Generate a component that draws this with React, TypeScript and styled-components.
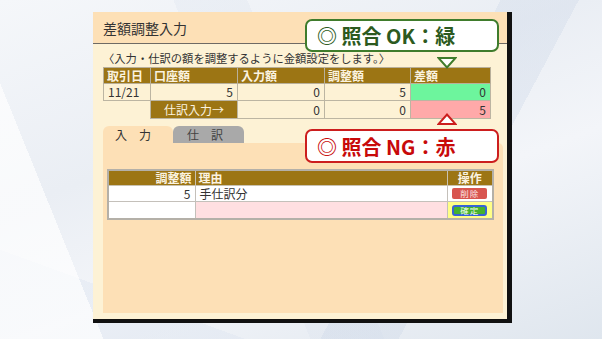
import React from 'react';
import styled, { createGlobalStyle } from 'styled-components';

const GlobalStyle = createGlobalStyle`
	html, body {
		margin: 0;
		padding: 0;
	}
	body {
		font-family: 'Noto Sans CJK JP', 'Noto Sans', sans-serif;
		color: #333;
	}
`;

const Page = styled.div`
	width: 602px;
	height: 339px;
	box-sizing: border-box;
	padding: 12px 0 0 93px;
	overflow: hidden;
	background:
		linear-gradient(118deg, transparent 0 64%, rgba(200, 212, 230, 0.3) 64% 74%, transparent 74%),
		linear-gradient(68deg, rgba(255, 255, 255, 0.7) 0 14%, transparent 14% 42%, rgba(215, 223, 236, 0.25) 42% 52%, transparent 52%),
		linear-gradient(20deg, rgba(220, 228, 240, 0.4) 0 16%, transparent 16%),
		linear-gradient(160deg, #f5f7fa 0%, #eaeef4 38%, #f3f5f9 62%, #dfe6ee 100%);
`;

const Panel = styled.div`
	position: relative;
	width: 414px;
	height: 307px;
	display: flex;
	flex-direction: column;
	background: #fdf2d5;
	border-right: 5px solid #111;
	border-bottom: 4px solid #111;
`;

const TitleBar = styled.div`
	height: 31px;
	display: flex;
	align-items: center;
	padding-left: 10px;
	background: #fde0b6;
	border-bottom: 1px solid #6e6a64;
	font-size: 14px;
	color: #333;
`;

const Body = styled.div`
	flex: 1;
	display: flex;
	flex-direction: column;
	padding: 8px 4px 6px 10px;
`;

const Description = styled.div`
	font-size: 11.3px;
	line-height: 13px;
	color: #333;
	white-space: nowrap;
`;

const Table = styled.table<{ width: number }>`
	border-collapse: collapse;
	table-layout: fixed;
	width: ${({ width }) => width}px;
	font-size: 12px;
	line-height: 14px;
`;

const HeadCell = styled.th<{ align?: string; h?: number }>`
	background: #9c7514;
	color: #fbf3e0;
	font-weight: bold;
	text-align: ${({ align }) => align || 'left'};
	padding: 0 3px;
	border: 1px solid #b9b09a;
	height: ${({ h }) => h || 15}px;
`;

const Cell = styled.td<{ bg?: string; align?: string; h?: number }>`
	background: ${({ bg }) => bg || 'transparent'};
	text-align: ${({ align }) => align || 'right'};
	padding: 0 4px;
	border: 1px solid #bcb5a2;
	height: ${({ h }) => h || 16}px;
	color: #333;
	vertical-align: middle;
`;

const EmptyCell = styled.td`
	border: none;
`;

const BrownCell = styled.td`
	background: #9c7514;
	color: #fbf3e0;
	text-align: center;
	border: 1px solid #bcb5a2;
	padding: 0 4px;
`;

const TopTable = styled(Table)`
	margin-top: 2px;
`;

const Tabs = styled.div`
	display: flex;
	margin-top: 7px;
	height: 17px;
`;

const Tab = styled.div<{ active?: boolean; pad: number; w: number }>`
	width: ${({ w }) => w}px;
	box-sizing: border-box;
	padding-left: ${({ pad }) => pad}px;
	background: ${({ active }) => (active ? '#fde0b6' : '#a9a9a9')};
	color: ${({ active }) => (active ? '#333' : '#444')};
	border-radius: 6px 6px 0 0;
	font-size: 12px;
	line-height: 18px;
`;

const TabPanel = styled.div`
	flex: 1;
	background: #fde0b6;
	border-top-right-radius: 5px;
	padding: 26px 0 0 4px;
`;

const LowerTable = styled(Table)`
	border: 2px solid #b4b0a8;
	font-size: 12px;
`;

const LowerHead = styled(HeadCell)`
	border-color: #c9c2b0;
`;

const LowerCell = styled(Cell)`
	border-color: #c4c0ba;
`;

const SmallButton = styled.div<{ variant: 'delete' | 'confirm' }>`
	width: 35px;
	height: 11px;
	margin: 0 auto;
	box-sizing: border-box;
	font-size: 8.5px;
	text-align: center;
	letter-spacing: 1px;
	color: ${({ variant }) => (variant === 'delete' ? '#fbe3e3' : '#f0fff0')};
	background: ${({ variant }) => (variant === 'delete' ? '#d8554f' : '#45b22e')};
	border: ${({ variant }) => (variant === 'confirm' ? '2px solid #3763d6' : 'none')};
	line-height: ${({ variant }) => (variant === 'confirm' ? 7 : 11)}px;
	border-radius: ${({ variant }) => (variant === 'confirm' ? 3 : 2)}px;
`;

const Callout = styled.div<{ tone: 'ok' | 'ng'; top: number; h: number }>`
	position: absolute;
	left: 212px;
	top: ${({ top }) => top}px;
	width: 194px;
	height: ${({ h }) => h}px;
	box-sizing: border-box;
	display: flex;
	align-items: center;
	padding-left: 10px;
	background: #fff;
	border: 2px solid ${({ tone }) => (tone === 'ok' ? '#3f7c2c' : '#cc1e1e')};
	border-radius: 7px;
	color: ${({ tone }) => (tone === 'ok' ? '#2c5a20' : '#c80a0a')};
	font-size: 20px;
	font-weight: bold;
	white-space: nowrap;
`;

const Arrow = styled.svg<{ top: number }>`
	position: absolute;
	left: 344px;
	top: ${({ top }) => top}px;
`;

export default function App(): JSX.Element {
	return (
		<Page>
			<GlobalStyle />
			<Panel>
				<TitleBar>差額調整入力</TitleBar>
				<Body>
					<Description>〈入力・仕訳の額を調整するように金額設定をします。〉</Description>
					<TopTable width={387}>
						<colgroup>
							<col style={{ width: 47 }} />
							<col style={{ width: 87 }} />
							<col style={{ width: 87 }} />
							<col style={{ width: 86 }} />
							<col style={{ width: 80 }} />
						</colgroup>
						<thead>
							<tr>
								<HeadCell>取引日</HeadCell>
								<HeadCell>口座額</HeadCell>
								<HeadCell>入力額</HeadCell>
								<HeadCell>調整額</HeadCell>
								<HeadCell>差額</HeadCell>
							</tr>
						</thead>
						<tbody>
							<tr>
								<Cell align="left">11/21</Cell>
								<Cell>5</Cell>
								<Cell>0</Cell>
								<Cell>5</Cell>
								<Cell bg="#6df59d">0</Cell>
							</tr>
							<tr>
								<EmptyCell />
								<BrownCell>仕訳入力→</BrownCell>
								<Cell h={17}>0</Cell>
								<Cell>0</Cell>
								<Cell bg="#ffa9a9">5</Cell>
							</tr>
						</tbody>
					</TopTable>
					<Tabs>
						<Tab active w={70} pad={12}>入　力</Tab>
						<Tab w={71} pad={14}>仕　訳</Tab>
					</Tabs>
					<TabPanel>
						<LowerTable width={385}>
							<colgroup>
								<col style={{ width: 87 }} />
								<col style={{ width: 252 }} />
								<col style={{ width: 46 }} />
							</colgroup>
							<thead>
								<tr>
									<LowerHead align="right" h={14}>調整額</LowerHead>
									<LowerHead h={14}>理由</LowerHead>
									<LowerHead align="center" h={14}>操作</LowerHead>
								</tr>
							</thead>
							<tbody>
								<tr>
									<LowerCell bg="#fff" h={15}>5</LowerCell>
									<LowerCell bg="#fff" align="left" h={15}>手仕訳分</LowerCell>
									<LowerCell bg="#fff" align="center" h={15}>
										<SmallButton variant="delete">削除</SmallButton>
									</LowerCell>
								</tr>
								<tr>
									<LowerCell bg="#fff" h={16} />
									<LowerCell bg="#ffdfe1" h={16} />
									<LowerCell bg="#ffff86" align="center" h={16}>
										<SmallButton variant="confirm">確定</SmallButton>
									</LowerCell>
								</tr>
							</tbody>
						</LowerTable>
					</TabPanel>
				</Body>
				<Callout tone="ok" top={7} h={33}>◎ 照合 OK：緑</Callout>
				<Arrow top={45} width={20} height={12} viewBox="0 0 20 12">
					<polygon points="1.5,1 18.5,1 10,10.5" fill="#fff" stroke="#3f7c2c" strokeWidth={2} />
				</Arrow>
				<Arrow top={101} width={20} height={12} viewBox="0 0 20 12">
					<polygon points="1.5,11 18.5,11 10,1.5" fill="#fff" stroke="#cc1e1e" strokeWidth={2} />
				</Arrow>
				<Callout tone="ng" top={117} h={34}>◎ 照合 NG：赤</Callout>
			</Panel>
		</Page>
	);
}
